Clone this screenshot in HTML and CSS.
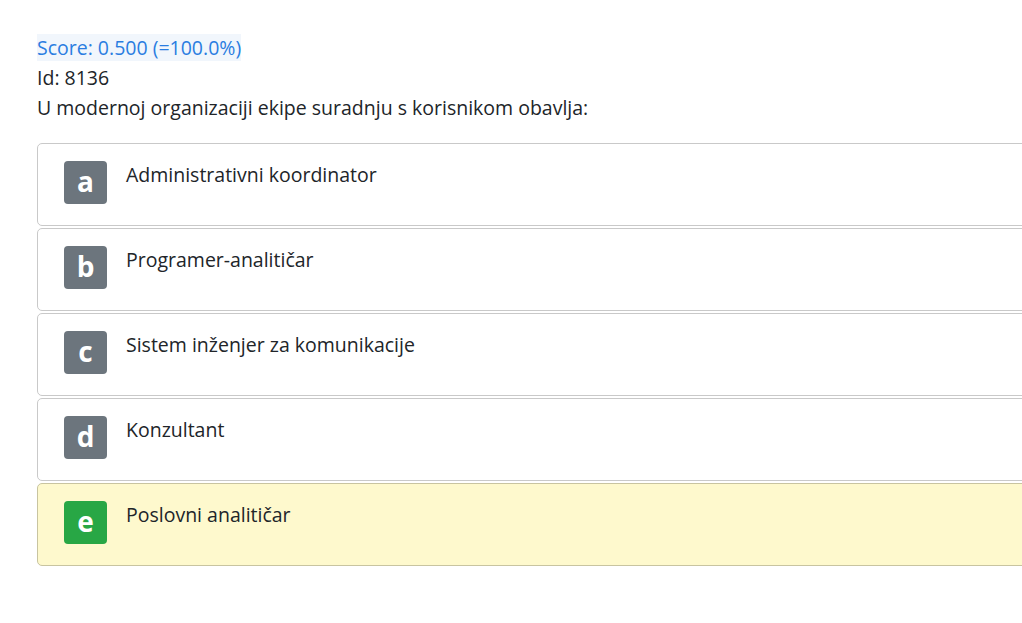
FILE: index.html
```html
<!DOCTYPE html>
<html lang="hr">
<head>
<meta charset="utf-8">
<title>Pitanje</title>
<link rel="stylesheet" href="styles.css">
</head>
<body>
<main class="page">
  <div class="meta">
    <div class="score"><span class="score-tag">Score: 0.500 (=100.0%)</span></div>
    <div class="line">Id: 8136</div>
    <div class="line">U modernoj organizaciji ekipe suradnju s korisnikom obavlja:</div>
  </div>
  <ul class="answers">
    <li class="answer"><span class="badge">a</span><span class="text">Administrativni koordinator</span></li>
    <li class="answer"><span class="badge">b</span><span class="text">Programer-analitičar</span></li>
    <li class="answer"><span class="badge">c</span><span class="text">Sistem inženjer za komunikacije</span></li>
    <li class="answer"><span class="badge">d</span><span class="text">Konzultant</span></li>
    <li class="answer correct"><span class="badge badge-ok">e</span><span class="text">Poslovni analitičar</span></li>
  </ul>
</main>
</body>
</html>
```
FILE: styles.css
```css
html, body {
  margin: 0;
  padding: 0;
  overflow: hidden;
  background: #fff;
}
body {
  font-family: "Open Sans", "Noto Sans", sans-serif;
  color: #212529;
}
.page {
  padding: 33px 0 0 37px;
  width: 1100px;
}
.meta {
  font-size: 19.5px;
  line-height: 30px;
}
.score-tag {
  color: #2a7de1;
  background: #f1f6fc;
  padding: 0;
}
.answers {
  list-style: none;
  margin: 20px 0 0 0;
  padding: 0;
}
.answer {
  display: flex;
  align-items: flex-start;
  border: 1px solid #c9c9c9;
  border-radius: 5px;
  padding: 0 0 0 26px;
  box-sizing: border-box;
  height: 83px;
  margin-bottom: 2px;
}
.correct {
  background: #fef9cd;
  border-color: #c8c4a0;
}
.badge {
  flex: none;
  width: 43px;
  height: 43px;
  margin-top: 17px;
  border-radius: 4px;
  background: #6c757d;
  color: #fff;
  font-weight: 700;
  font-size: 28px;
  line-height: 41px;
  text-align: center;
}
.badge-ok {
  background: #28a745;
}
.text {
  margin-left: 19px;
  margin-top: 17px;
  font-size: 19.5px;
  line-height: 28px;
}
```
